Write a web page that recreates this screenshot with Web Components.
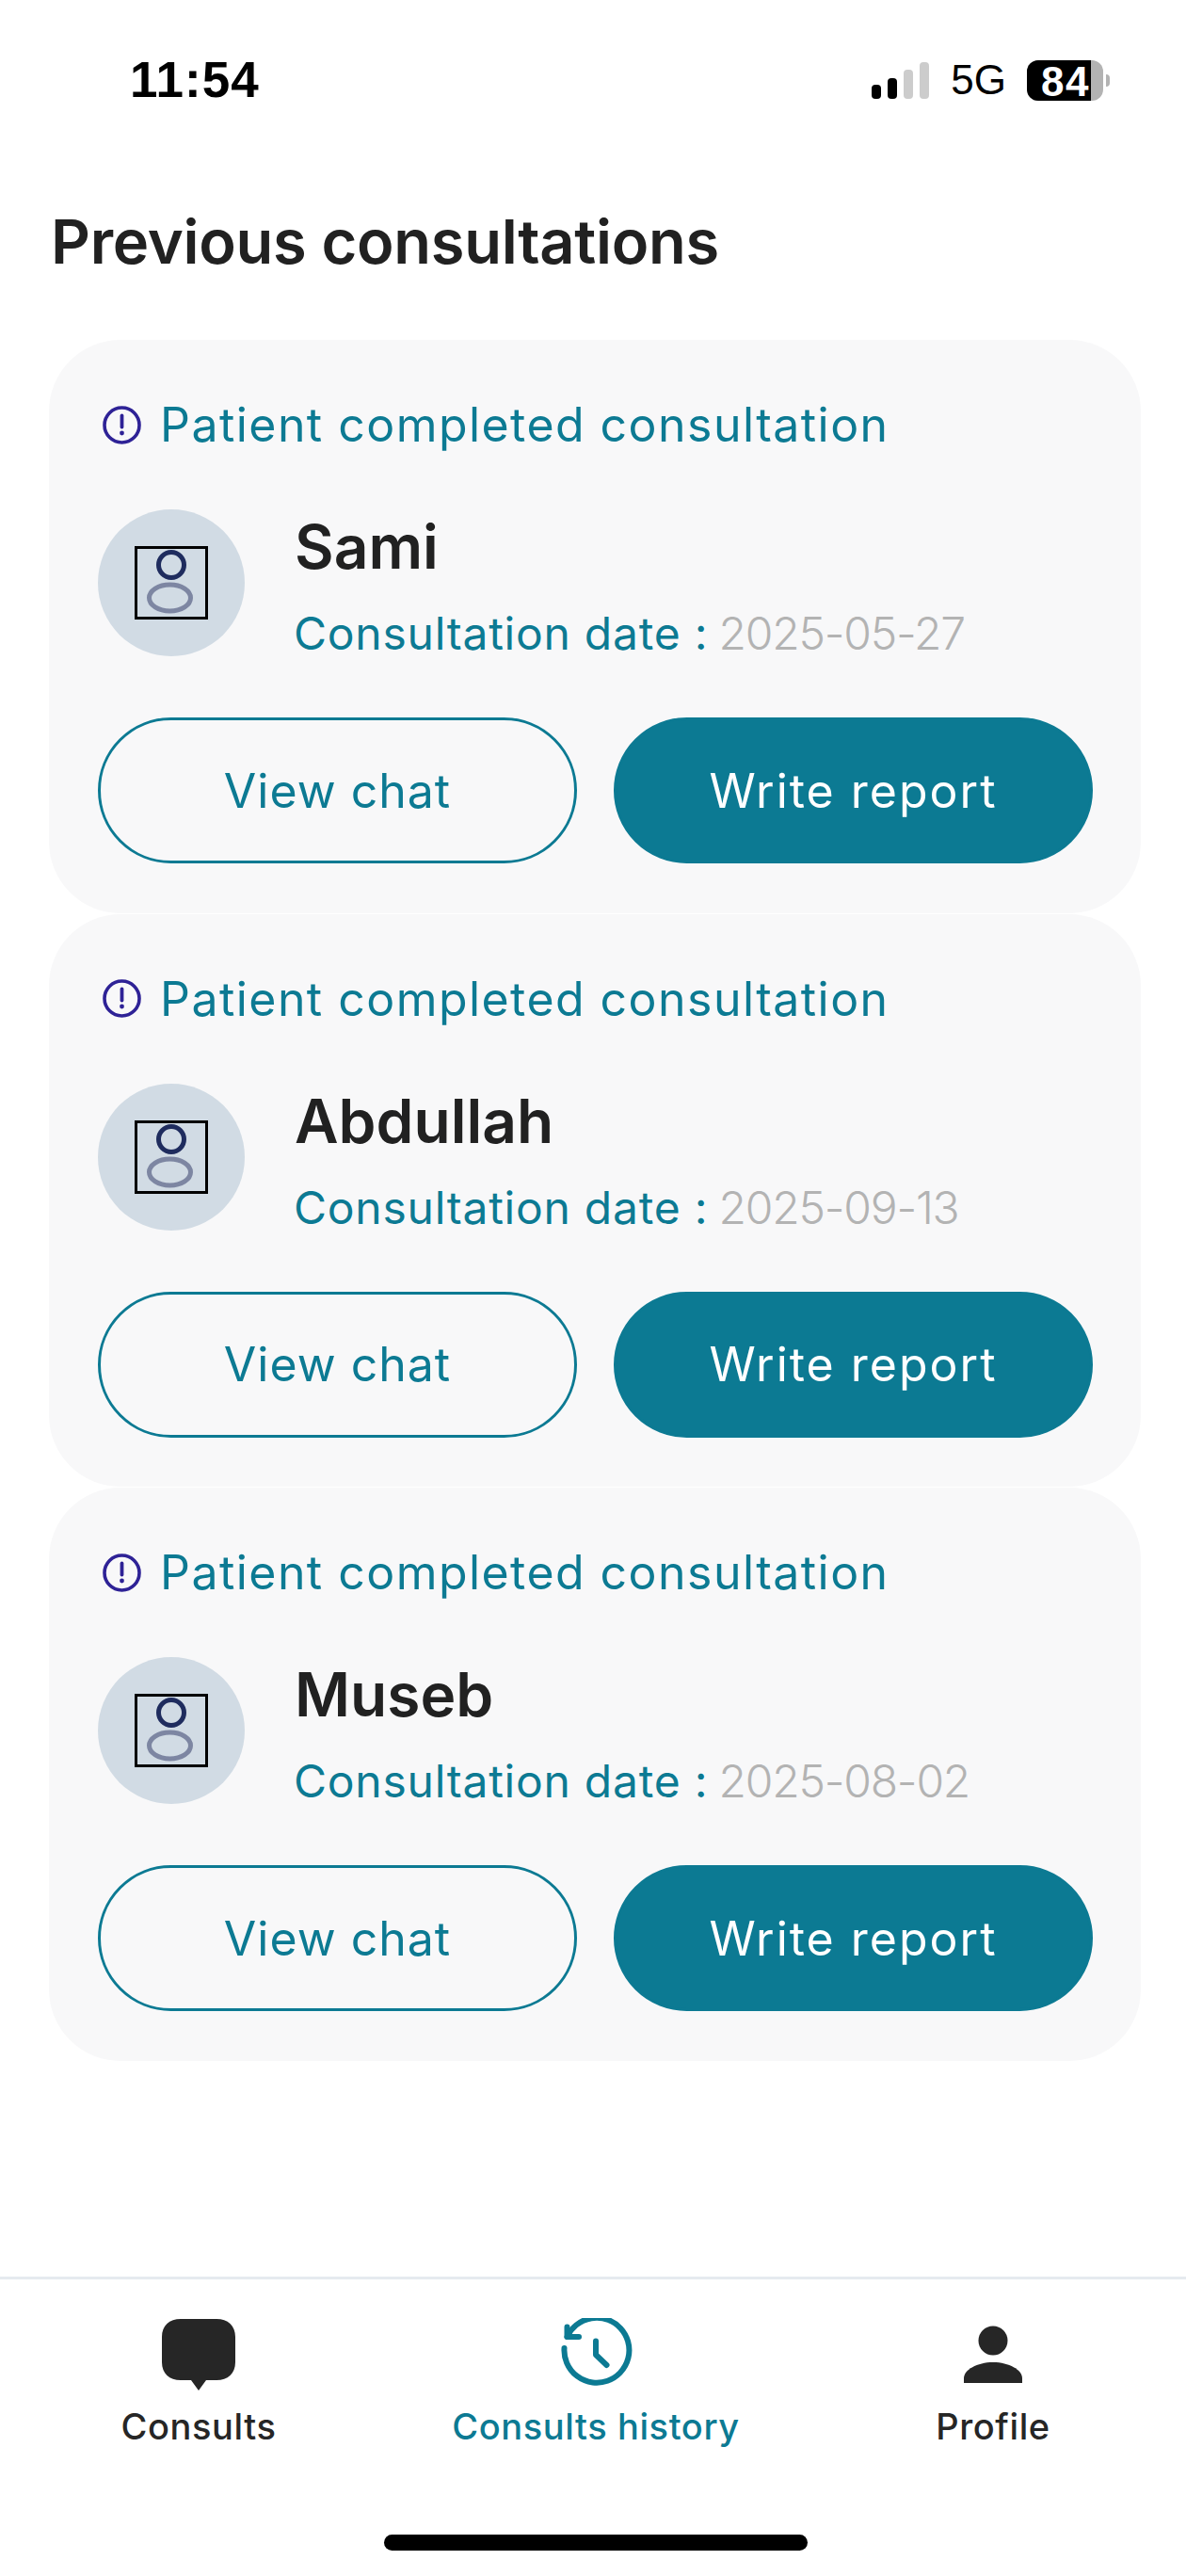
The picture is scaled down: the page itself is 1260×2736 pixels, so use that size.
<!DOCTYPE html>
<html><head><meta charset="utf-8"><style>
html,body{margin:0;padding:0;background:#fff}
body{width:1260px;height:2736px;overflow:hidden;font-family:Inter,"Noto Sans",sans-serif}
</style></head><body>
<app-screen>
  <phone-status slot="status"></phone-status>
  <consult-card name="Sami" date="2025-05-27"></consult-card>
  <consult-card name="Abdullah" date="2025-09-13"></consult-card>
  <consult-card name="Museb" date="2025-08-02"></consult-card>
  <tab-bar slot="tabs"></tab-bar>
</app-screen>
<script>
function def(name, css, html){
  customElements.define(name, class extends HTMLElement{
    connectedCallback(){
      if(this.shadowRoot) return;
      const r=this.attachShadow({mode:'open'});
      const h=typeof html==='function'?html(this):html;
      r.innerHTML='<style>'+css+'</style>'+h;
    }
  });
}
def('app-screen',`
:host{display:flex;flex-direction:column;width:1260px;height:2736px;background:#fff;color:#212121}
h1{margin:0;padding:0 0 0 54px;font:600 65px/76px Inter,sans-serif;letter-spacing:-.3px;color:#212121;height:142px;box-sizing:border-box;}
.list{display:flex;flex-direction:column;flex:1;padding:0 48px 0 52px}
`,`<slot name="status"></slot><h1>Previous consultations</h1><div class="list"><slot></slot></div><slot name="tabs"></slot>`);

def('phone-status',`
:host{display:flex;align-items:flex-start;height:219px;box-sizing:border-box;padding:0 81px 0 138px;color:#000}
.wrap{display:flex;width:100%;height:130px;align-items:center;justify-content:space-between;margin-top:20px}
.time{font:700 53px/60px "Liberation Sans",Arial,sans-serif;letter-spacing:1px}
.right{display:flex;align-items:center}
.sig{display:flex;align-items:flex-end;gap:6.5px;height:39px;margin-right:23px}
.sig i{display:block;width:10.5px;border-radius:4px;background:#000}
.net{font:400 44px/44px "Liberation Sans",Arial,sans-serif;margin-right:22px}
.bat{display:flex;width:81px;height:43px;border-radius:12px;background:#b3b3b3}
.fill{width:68px;height:43px;border-radius:12px 0 0 12px;background:#000;color:#fff;font:700 44px/45px "Liberation Sans",Arial,sans-serif;text-align:right;padding-right:1px;box-sizing:border-box;letter-spacing:1.500px}
.nub{width:4px;height:13px;border-radius:0 7px 7px 0;background:#b3b3b3;margin-left:3px}
`,`<div class="wrap"><span class="time">11:54</span><div class="right">
<div class="sig"><i style="height:15px"></i><i style="height:22px"></i><i style="height:31px;background:#ccc"></i><i style="height:39px;background:#ccc"></i></div>
<span class="net">5G</span><div class="bat"><div class="fill">84</div></div><div class="nub"></div></div></div>`);

const ALERT=`<svg width="41" height="41" viewBox="0 0 41 41" fill="none"><circle cx="20.5" cy="20.5" r="18.5" stroke="#2e2296" stroke-width="3.6"/><path d="M20.5 10.5v12" stroke="#2e2296" stroke-width="3.8" stroke-linecap="round"/><circle cx="20.5" cy="29" r="2.4" fill="#2e2296"/></svg>`;

def('person-avatar',`
:host{display:flex;align-items:center;justify-content:center;flex:none;width:156px;height:156px;border-radius:50%;background:#d1dbe4}
svg{display:block}
`,`<svg width="78" height="78" viewBox="0 0 78 78" fill="none"><rect x="1.5" y="1.5" width="75" height="75" stroke="#000" stroke-width="3"/><circle cx="39" cy="20" r="13.5" stroke="#1f2c5e" stroke-width="5"/><ellipse cx="37.5" cy="55" rx="22" ry="14" stroke="#7d86a2" stroke-width="5"/></svg>`);

def('pill-button',`
:host{display:flex;flex:none;width:509px;height:155px;box-sizing:border-box;border-radius:78px;border:3px solid #0c7a93;align-items:center;justify-content:center;font:400 50px/60px Inter,sans-serif;letter-spacing:1px;color:#0c7a93}
:host([solid]){background:#0c7a93;color:#fff}
`,`<slot></slot>`);

def('consult-card',`
:host{display:block;width:1160px;height:608.5px;margin-bottom:1px;box-sizing:border-box;padding:60px 51px 0 52px;background:#f8f8f9;border-radius:76px}
.status{display:flex;align-items:center;height:60px;gap:20px;font:400 50px/60px Inter,sans-serif;letter-spacing:1.45px;color:#0c7a93}
.status svg{flex:none;margin-left:5px}
.who{display:flex;align-items:flex-start;margin-top:60px;height:156px}
.txt{margin-left:53px;display:flex;flex-direction:column}
.name{font:600 64px/76px Inter,sans-serif;letter-spacing:0;color:#212121;margin-top:2px}
.date{font:400 48px/60px Inter,sans-serif;color:#0c7a93;margin:24px 0 0 -1px;letter-spacing:.75px}
.date span{color:#b3b3b3;font-weight:300;letter-spacing:-1.2px;margin-left:-3px}
.btns{display:flex;justify-content:space-between;margin-top:65px}
`,el=>`<div class="status">${ALERT}<span>Patient completed consultation</span></div>
<div class="who"><person-avatar></person-avatar><div class="txt"><div class="name">${el.getAttribute('name')}</div><div class="date">Consultation date : <span>${el.getAttribute('date')}</span></div></div></div>
<div class="btns"><pill-button>View chat</pill-button><pill-button solid style="letter-spacing:2px">Write report</pill-button></div>`);

def('tab-item',`
:host{display:flex;flex-direction:column;align-items:center;color:#262626;font:450 38px/46px Inter,sans-serif;letter-spacing:.6px}
:host([active]){color:#0c7a93}
.i{height:78px;display:flex;align-items:center;justify-content:center;margin-bottom:14px}
`,`<div class="i"><slot name="icon"></slot></div><slot></slot>`);

def('tab-bar',`
:host{display:block;flex:none;width:1260px;height:318px;box-sizing:border-box;border-top:3px solid #e6eaef;padding-top:41px;overflow:hidden;background:#fff}
.g{display:grid;grid-template-columns:repeat(3,422px)}
.home{width:450px;height:17px;border-radius:9px;background:#000;margin:92px 0 0 408px}
`,`<div class="g">
<tab-item><svg slot="icon" width="78" height="78" viewBox="0 0 78 78"><path d="M20 1h38c12 0 20 7 20 19v27c0 12-8 19-20 19H47l-8 11-8-11H20C8 66 0 59 0 47V20C0 8 8 1 20 1z" fill="#262626"/></svg>Consults</tab-item>
<tab-item active><svg slot="icon" width="78" height="78" viewBox="0 0 78 78" fill="none" stroke="#0c7a93" stroke-width="6" stroke-linecap="round" stroke-linejoin="round"><path d="M8.500 20A34.500 34.500 0 1 1 5.500 32"/><path d="M8.500 9.500V20H21"/><path d="M39 24.500V39L50.500 50"/></svg>Consults history</tab-item>
<tab-item><svg slot="icon" width="62" height="78" viewBox="0 0 62 78"><circle cx="31" cy="24" r="15.500" fill="#262626"/><path d="M0 69v-5c0-9 14-17 31-17s31 8 31 17v5z" fill="#262626"/></svg>Profile</tab-item>
</div><div class="home"></div>`);
</script>
</body></html>
